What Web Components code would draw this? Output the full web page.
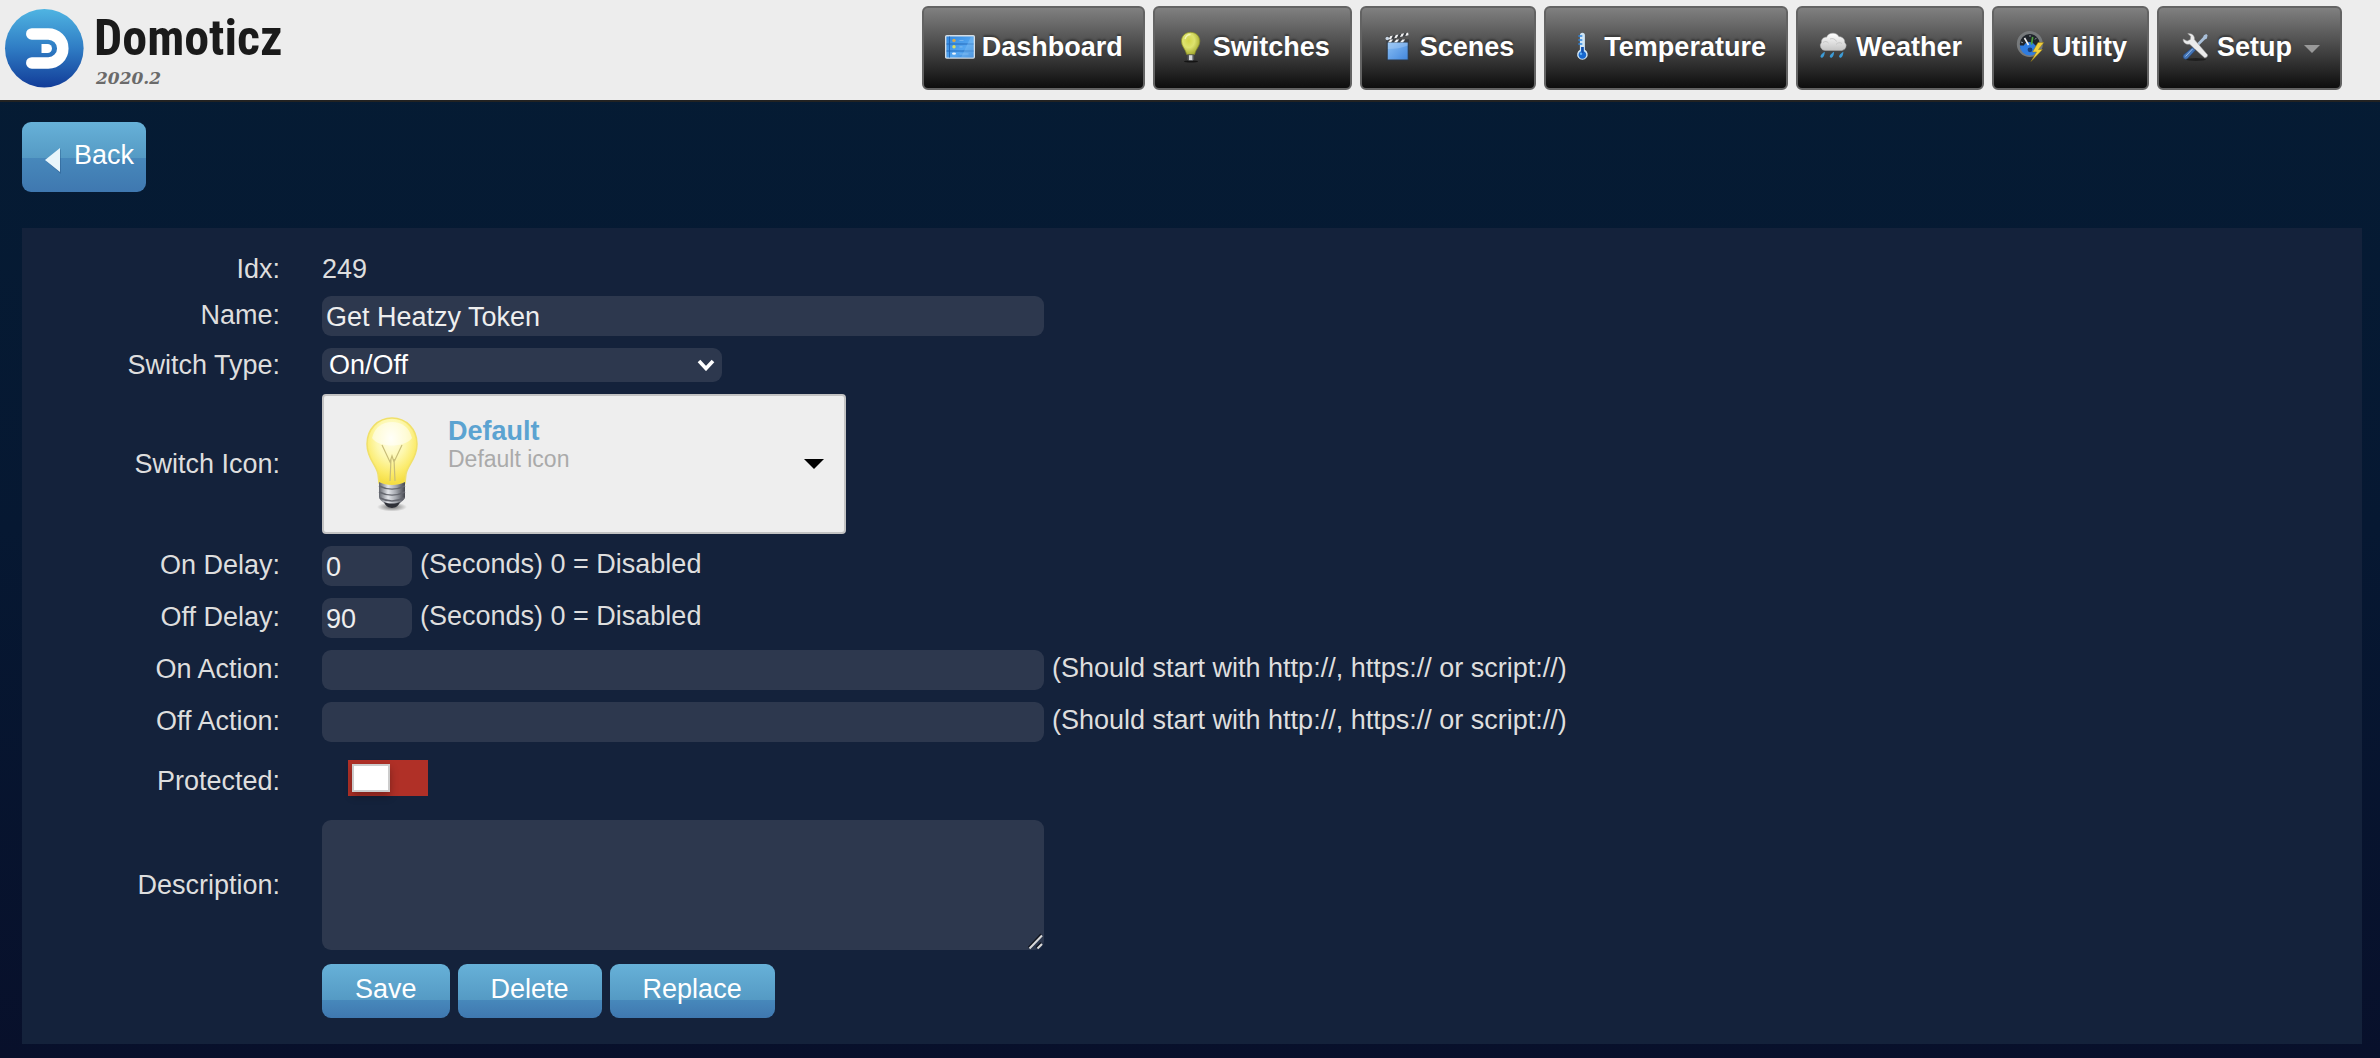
<!DOCTYPE html>
<html lang="en">
<head>
<meta charset="utf-8">
<title>Domoticz</title>
<style>
  html { height: 100%; }
  body {
    margin: 0;
    min-height: 100vh;
    background: linear-gradient(#051c34, #061832 50%, #08102b) no-repeat;
    color: #dedede;
    font: 27px/30px "Liberation Sans", Arial, sans-serif;
  }
</style>
</head>
<body>
<dz-header version="2020.2">
  <dz-nav-item href="#Dashboard" icon="dashboard">Dashboard</dz-nav-item>
  <dz-nav-item href="#LightSwitches" icon="switches">Switches</dz-nav-item>
  <dz-nav-item href="#Scenes" icon="scenes">Scenes</dz-nav-item>
  <dz-nav-item href="#Temperature" icon="temperature">Temperature</dz-nav-item>
  <dz-nav-item href="#Weather" icon="weather">Weather</dz-nav-item>
  <dz-nav-item href="#Utility" icon="utility">Utility</dz-nav-item>
  <dz-nav-item href="#Setup" icon="setup" menu>Setup</dz-nav-item>
</dz-header>
<dz-page>
  <dz-button slot="actions" back>Back</dz-button>
  <dz-device-form></dz-device-form>
</dz-page>

<script>
const ICONS = {
  dashboard: `
    <defs><linearGradient id="s" x1="0" y1="0" x2="1" y2="1"><stop offset="0" stop-color="#2f86df"/><stop offset=".6" stop-color="#55a6f0"/><stop offset="1" stop-color="#2c78cf"/></linearGradient></defs>
    <rect x="1.7" y="4.7" width="28.6" height="22.4" rx="1" fill="url(#s)" stroke="#d3dde6" stroke-width="1.4"/>
    <path d="M2.5 13h27M2.5 20h27M5.5 5.5v21" stroke="#2168b8" stroke-width=".9"/>
    <path d="M17 26.4 27 5.4h2.6v21z" fill="#8cc8fa" opacity=".35"/>
    <circle cx="10" cy="9.4" r="1.7" fill="#d8a94a"/><circle cx="10" cy="15.8" r="1.7" fill="#d9dc62"/><ellipse cx="10" cy="22.6" rx="2" ry="1.2" fill="#eef5fb"/>
    <path d="M15.500 9.500h4M15.500 15.800h3M15.500 23h9" stroke="#9fcdf5" stroke-width="1.200" opacity=".5"/>`,
  switches: `
    <defs><radialGradient id="b" cx=".4" cy=".38" r=".62"><stop offset="0" stop-color="#d3d64a"/><stop offset=".5" stop-color="#dde36f"/><stop offset="1" stop-color="#a9ae35"/></radialGradient></defs>
    <ellipse cx="16" cy="30.500" rx="7" ry="1" fill="#000" opacity=".6"/>
    <path d="M15.600 1.300c5.500 0 9.200 3.900 9.200 8.900 0 5.300-4 7.600-5.300 13.300h-7.800c-1.300-5.700-5.300-8-5.300-13.300 0-5 3.700-8.900 9.200-8.900z" fill="url(#b)" stroke="#8a8f26" stroke-width=".7"/>
    <path d="M10 8c1-3 3-4.500 5.500-4.500" stroke="#f3f5b5" stroke-width="1.300" fill="none"/>
    <path d="M12.500 23.500h6.600v4.700l-1.500 1.800h-3.600l-1.500-1.800z" fill="#55575a"/><path d="M14 24.200h3.400v4.800H14z" fill="#d5d7da"/>`,
  scenes: `
    <defs><linearGradient id="c" x1="0" y1="0" x2="1" y2="1"><stop offset="0" stop-color="#8dc1f5"/><stop offset="1" stop-color="#4186dd"/></linearGradient></defs>
    <rect x="5.200" y="10.500" width="21" height="18.500" fill="url(#c)" stroke="#2c3744" stroke-width="1"/>
    <path d="M5.800 18c8 0 14-1 20-3.500v-2.500h-20z" fill="#fff" opacity=".18"/>
    <path d="M4.500 8.300h22.500v3.200H4.500z" fill="#3b3e42"/><path d="M3.600 6 26 1.400l.8 3.200L4.600 9.200z" fill="#3b3e42"/>
    <path d="m6 11.300 2.400-2.800h2.800L9 11.300zm6 0 2.400-2.800h2.800L15 11.300zm6 0 2.400-2.800h2.800L21 11.300zM6.500 8.500l1.600-3.300 2.700-.6-1.600 3.300zm5.700-1.200 1.600-3.300 2.700-.6-1.600 3.300zm5.700-1.200 1.600-3.300 2.700-.6-1.600 3.300zM23.300 5l1.200-3 1.600-.4.500 2.700z" fill="#f2f2f2"/>
    <circle cx="5.300" cy="7.500" r="1.800" fill="#c9d6e4"/>`,
  temperature: `
    <path d="M16.400 1.700a2.500 2.500 0 0 0-2.500 2.500v14.600a5.300 5.300 0 1 0 5 0V4.200a2.500 2.500 0 0 0-2.500-2.500z" fill="#cfe5f5"/>
    <path d="M15 16h2.800v4.300a3.900 3.900 0 1 1-2.800 0z" fill="#1769d0"/><path d="M15.600 16h1.800v6h-1.800z" fill="#174fa8"/>
    <circle cx="15" cy="22.700" r="1.200" fill="#5fb0f7"/>
    <path d="M12.300 5h4M12.300 9h4M12.300 13h4" stroke="#2c86e4" stroke-width="1.300"/>`,
  weather: `
    <defs><linearGradient id="w" x1="0" y1="0" x2="0" y2="1"><stop offset="0" stop-color="#fff"/><stop offset="1" stop-color="#c4c4c4"/></linearGradient></defs>
    <path d="M7 19.500a5 5 0 0 1-3.500-8.200C3.200 8 5.800 5.800 8.600 6.200c1-2.600 3.600-4.200 6.500-4 2.700 0 4.800 1.300 5.800 3.500 3.500-.1 6.200 2.500 5.700 5.600a4.800 4.800 0 0 1-2.600 8.200z" fill="url(#w)" stroke="#aaa" stroke-width=".5"/>
    <path d="M5 11.500c2-1.500 4-1.200 5.500.6M12 8c2.500-1 5.500 0 6.500 2.500M18 13.500c1.500-2 4-2.300 6-1" stroke="#c6c6c6" fill="none"/>
    <path d="M6.800 20.800c-.2 3.500-1.200 6-3.200 6-2.600-.8-.3-4 3.200-6zm9.300 0c-.2 3.500-1.200 6-3.200 6-2.600-.8-.3-4 3.200-6zm9.300 0c-.2 3.500-1.200 6-3.200 6-2.600-.8-.3-4 3.200-6z" fill="#3c9bd6"/>`,
  utility: `
    <circle cx="15.800" cy="13" r="11.500" fill="#20252c" stroke="#777a7c" stroke-width="3"/>
    <path d="M5.800 14.500h4a6.500 6.500 0 0 1 11.500 0h4.500a10 10 0 0 1-20 0z" fill="#2f7ce0"/>
    <circle cx="16" cy="18.800" r="2.400" fill="#1b3f77"/>
    <path d="m14.500 14-4-7" stroke="#f0f0f0" stroke-width="1.600"/><path d="M17.500 13.500 18.700 6" stroke="#4fa53c" stroke-width="1.600"/>
    <path d="M7 11l2 .8M16 4v2M22.500 6.800 21 8.500" stroke="#8c969f" stroke-width="1"/>
    <path d="M24 11.500 18.500 21h4L17 30.500 28.500 18.500h-4l5.300-7z" fill="#f2cf3c" stroke="#8b7418" stroke-width=".5"/>`,
  setup: `
    <ellipse cx="17" cy="28.500" rx="10" ry="1.500" fill="#000" opacity=".4"/>
    <path d="M27.300 3 28.600 4.300l-.7 3.200-2 .9L14.500 19.700l-1.700-1.700L24 6.200l.9-2z" fill="#a9bfd8"/>
    <path d="m13.500 16.300 2.900 2.900-7.700 8.200c-1.100 1.100-2.900 1.100-3.900 0s-1-2.800.1-3.900z" fill="#4474b5" stroke="#1f3c6e" stroke-width=".6"/><path d="m6.500 25.500 7-7.500" stroke="#9cc0ea" stroke-width="1"/>
    <path d="M8.700 2.600c4-.9 7.400 2.200 6.700 6L28.500 23.700c.6 1.500-1.300 3.400-3 3L10.700 13.200c-3.600.8-6.700-1.500-6.600-5.200l4 2 3.200-1.500.4-3.300z" fill="#ebebeb" stroke="#999" stroke-width=".5"/>`
};

const define = (name, css, html) => customElements.define(name, class extends HTMLElement {
  constructor() {
    super();
    this.attachShadow({ mode: "open" });
  }
  connectedCallback() {
    if (this.shadowRoot.childNodes.length) return;
    const template = document.createElement("template");
    template.innerHTML = `<style>${css}</style>${typeof html === "function" ? html(this) : html}`;
    this.shadowRoot.append(template.content.cloneNode(true));
  }
});

define("dz-header", `
  :host { display: flex; justify-content: space-between; align-items: flex-start; box-sizing: border-box;
    min-height: 102px; padding: 6px 38px 0 4px; background: #ededed; border-bottom: 2px solid #222; }
  .brand { display: flex; gap: 8px; color: #1a1a1a; text-decoration: none; }
  svg { display: block; width: 82px; height: 84px; }
  .words { display: flex; flex-direction: column; }
  .title { font: bold 50px/64px "Roboto Condensed", "Open Sans Condensed", "Liberation Sans Narrow", "Liberation Sans", sans-serif; }
  .version { padding-left: 2px; font: italic bold 17px/17px "DejaVu Serif", serif; color: #6a6a6a; }
  nav { display: flex; gap: 8px; }`,
  host => `
  <a class="brand" href="#">
    <svg viewBox="0 0 82 84" aria-hidden="true">
      <defs><linearGradient id="g" x1="0" y1="0" x2="0" y2="1"><stop offset="0" stop-color="#4fb4e2"/><stop offset=".5" stop-color="#2f7cc4"/><stop offset="1" stop-color="#123c98"/></linearGradient></defs>
      <circle cx="40.300" cy="42.300" r="39.300" fill="url(#g)"/>
      <path d="M27.800 27.900H44.300a14.500 14.500 0 0 1 0 29H27.800" fill="none" stroke="#fff" stroke-width="11.500" stroke-linecap="round"/>
      <path d="M37.500 38h6a4.500 4.500 0 0 1 0 9h-6z" fill="#fff"/>
    </svg>
    <span class="words"><span class="title">Domoticz</span><span class="version">${host.getAttribute("version")}</span></span>
  </a>
  <nav><slot></slot></nav>`);

define("dz-nav-item", `
  :host { display: block; }
  a { display: flex; align-items: center; gap: 6px; box-sizing: border-box; height: 84px; padding: 0 20px 2px;
    border: 2px solid #636363; border-radius: 6px; background: linear-gradient(#808080, #0d0d0d);
    color: #fff; font-weight: bold; text-decoration: none; text-shadow: 0 -2px 2px rgba(0,0,0,.35); }
  svg { flex: none; width: 32px; height: 32px; overflow: visible; }
  i { width: 0; margin: 4px 0 0 6px; border: 8px solid transparent; border-top-color: #999; border-bottom: 0; }`,
  host => `<a href="${host.getAttribute("href")}"><svg viewBox="0 0 32 32" aria-hidden="true">${ICONS[host.getAttribute("icon")]}</svg><slot></slot>${host.hasAttribute("menu") ? "<i></i>" : ""}</a>`);

define("dz-page", `
  :host { display: flex; flex-direction: column; gap: 36px; padding: 20px 18px 14px 22px; }
  .actions { display: flex; }`,
  `<div class="actions"><slot name="actions"></slot></div><slot></slot>`);

define("dz-button", `
  :host { display: block; }
  button { display: flex; align-items: center; gap: 8px; box-sizing: border-box; height: 54px; padding: 0 33px 4px; border: 0; border-radius: 9px;
    background: linear-gradient(#67b1d8, #559ac4 36px, #4788bb 36px, #3f78b0); color: #fff; font: inherit; cursor: pointer; }
  :host([back]) button { height: 70px; padding: 0 12px 4px; }
  svg { width: 32px; height: 32px; overflow: visible; }`,
  host => `<button type="button">${host.hasAttribute("back") ? `<svg viewBox="0 0 32 32" aria-hidden="true">
    <path d="M12.500 22.500 27 35V10z" fill="#1e4a7a" opacity=".35"/><path d="M11 21 26 33V9z" fill="#e9f6fb"/></svg>` : ""}<slot></slot></button>`);

define("dz-row", `
  :host { display: grid; grid-template-columns: 258px 1fr; column-gap: 42px; align-items: center; min-height: var(--row, 40px); }
  .label { text-align: right; padding-bottom: var(--lift, 3px); }
  .value { display: flex; align-items: center; gap: 8px; }`,
  `<div class="label"><slot name="label"></slot></div><div class="value"><slot></slot></div>`);

define("dz-note", `:host { display: block; padding-bottom: 4px; }`, `<slot></slot>`);

define("dz-bulb", `
  :host { display: block; }
  svg { display: block; width: 96px; height: 96px; }`,
  `<svg viewBox="0 0 96 96" aria-hidden="true">
    <defs>
      <radialGradient id="y" cx=".48" cy=".3" r=".66"><stop offset="0" stop-color="#fffef2"/><stop offset=".45" stop-color="#fdf8b0"/><stop offset=".8" stop-color="#fbea66"/><stop offset="1" stop-color="#f5de45"/></radialGradient>
      <linearGradient id="m" x1="0" y1="0" x2="1" y2="0"><stop offset="0" stop-color="#63666e"/><stop offset=".35" stop-color="#e3e5ea"/><stop offset=".65" stop-color="#a5a8af"/><stop offset="1" stop-color="#44464e"/></linearGradient>
      <radialGradient id="d"><stop offset="0" stop-color="#000" stop-opacity=".55"/><stop offset="1" stop-color="#000" stop-opacity="0"/></radialGradient>
    </defs>
    <ellipse cx="48" cy="91" rx="15" ry="4.500" fill="url(#d)"/>
    <path d="M48 2c14 0 25 11 25 26 0 15-9 20-11 30l-1 9c-7 4-19 4-26 0l-1-9c-2-10-11-15-11-30C23 13 34 2 48 2z" fill="url(#y)" stroke="#f0e06a" stroke-width="1.500"/>
    <path d="M28 22C31 11 38 6 48 6s17 5 20 16c-6 9-32 11-40 0z" fill="#fff" opacity=".5"/>
    <path d="M38 29l8 17 2-6 2 6 8-17M47 43l-1 22M50 43l1 22" fill="none" stroke="#c8bd78" stroke-width="1.200"/>
    <path d="M35 66c7 4 19 4 26 0v15c0 3-6 6-8 9-2 2-8 2-10 0-2-3-8-6-8-9z" fill="url(#m)"/>
    <path d="M35 70c8 4 18 4 26 0M35 76c8 4 18 4 26 0M36 82c8 4 16 4 24 0" fill="none" stroke="#666870" stroke-width="1.600"/>
    <path d="M40 86c5 2 11 2 16 0-1 3-4 6-8 6s-7-3-8-6z" fill="#2d2f36"/>
  </svg>`);

define("dz-device-form", `
  :host { display: block; padding: 26px 0; background: #14223b; }
  form { display: flex; flex-direction: column; gap: 12px; }
  input, select, textarea { box-sizing: border-box; margin: 0; border: 0; border-radius: 9px; background: #2d384e; color: #eee; font: inherit; outline: 0; }
  input[type=text] { width: 722px; height: 40px; padding: 2px 4px 0; }
  input.short { width: 90px; }
  .select, .area { display: grid; }
  .select > *, .area > * { grid-area: 1 / 1; }
  select { width: 400px; height: 34px; padding: 0 7px; color: #fff; appearance: none; }
  .select svg { place-self: center end; margin-right: 7px; width: 18px; height: 12px; pointer-events: none; }
  textarea { display: block; width: 722px; height: 130px; padding: 8px; resize: none; }
  .area svg { place-self: end; width: 16px; height: 17px; pointer-events: none; }
  .picker { display: flex; align-items: flex-start; box-sizing: border-box; width: 524px; height: 140px; padding: 20px; border: 2px solid #c3c3c3; border-radius: 4px;
    background: #eee; color: #aaa; font: 23px/26px "Liberation Sans", Arial, sans-serif; text-align: left; }
  .words { flex: 1; display: flex; flex-direction: column; padding-left: 8px; }
  .words b { color: #5ba3d1; font-size: 27px; line-height: 30px; }
  .picker i { align-self: center; border: 10px solid transparent; border-top-color: #000; border-bottom: 0; }
  input[type=checkbox] { display: flex; align-items: center; width: 80px; height: 36px; margin: 0 0 6px 26px; padding: 0 4px; appearance: none; border-radius: 0; background: #b03027; }
  input[type=checkbox]::before { content: ""; box-sizing: border-box; width: 38px; height: 28px; border: 2px solid #ccc; background: #fff; box-shadow: 0 4px 8px rgba(0,0,0,.3); }
  input[type=checkbox]:checked { justify-content: flex-end; background: #2c9a3f; }
  .idx { --row: 30px; --lift: 0; }
  .plain { --row: 34px; --lift: 0; }
  .protected { --row: 54px; --lift: 0; }
  .buttons { padding-top: 2px; }`,
  `<form>
    <dz-row class="idx"><span slot="label">Idx:</span><span>249</span></dz-row>
    <dz-row><label slot="label" for="name">Name:</label><input id="name" type="text" value="Get Heatzy Token"></dz-row>
    <dz-row class="plain"><label slot="label" for="type">Switch Type:</label>
      <span class="select"><select id="type"><option>On/Off</option></select>
      <svg viewBox="0 0 18 12" aria-hidden="true"><path d="m2 2 7 7.500L16 2" fill="none" stroke="#fff" stroke-width="3.600"/></svg></span></dz-row>
    <dz-row class="plain"><label slot="label" for="icon">Switch Icon:</label>
      <button class="picker" id="icon" type="button" aria-haspopup="listbox"><dz-bulb></dz-bulb><span class="words"><b>Default</b><span>Default icon</span></span><i></i></button></dz-row>
    <dz-row><label slot="label" for="ondelay">On Delay:</label><input class="short" id="ondelay" type="text" value="0"><dz-note>(Seconds) 0 = Disabled</dz-note></dz-row>
    <dz-row><label slot="label" for="offdelay">Off Delay:</label><input class="short" id="offdelay" type="text" value="90"><dz-note>(Seconds) 0 = Disabled</dz-note></dz-row>
    <dz-row><label slot="label" for="onaction">On Action:</label><input id="onaction" type="text"><dz-note>(Should start with http://, https:// or script://)</dz-note></dz-row>
    <dz-row><label slot="label" for="offaction">Off Action:</label><input id="offaction" type="text"><dz-note>(Should start with http://, https:// or script://)</dz-note></dz-row>
    <dz-row class="protected"><label slot="label" for="protected">Protected:</label><input id="protected" type="checkbox" role="switch"></dz-row>
    <dz-row class="plain"><label slot="label" for="description">Description:</label>
      <span class="area"><textarea id="description"></textarea>
      <svg viewBox="0 0 16 17" aria-hidden="true"><path d="M.5 14.500 13 1M8 14.500l5-5" stroke="#11151e" stroke-width="1.600"/><path d="M1.500 15.500 14 2.500M9.500 15.500l4.500-4.500" stroke="#d8d8d8" stroke-width="2"/></svg></span></dz-row>
    <dz-row class="buttons"><dz-button>Save</dz-button><dz-button>Delete</dz-button><dz-button>Replace</dz-button></dz-row>
  </form>`);
</script>
</body>
</html>
